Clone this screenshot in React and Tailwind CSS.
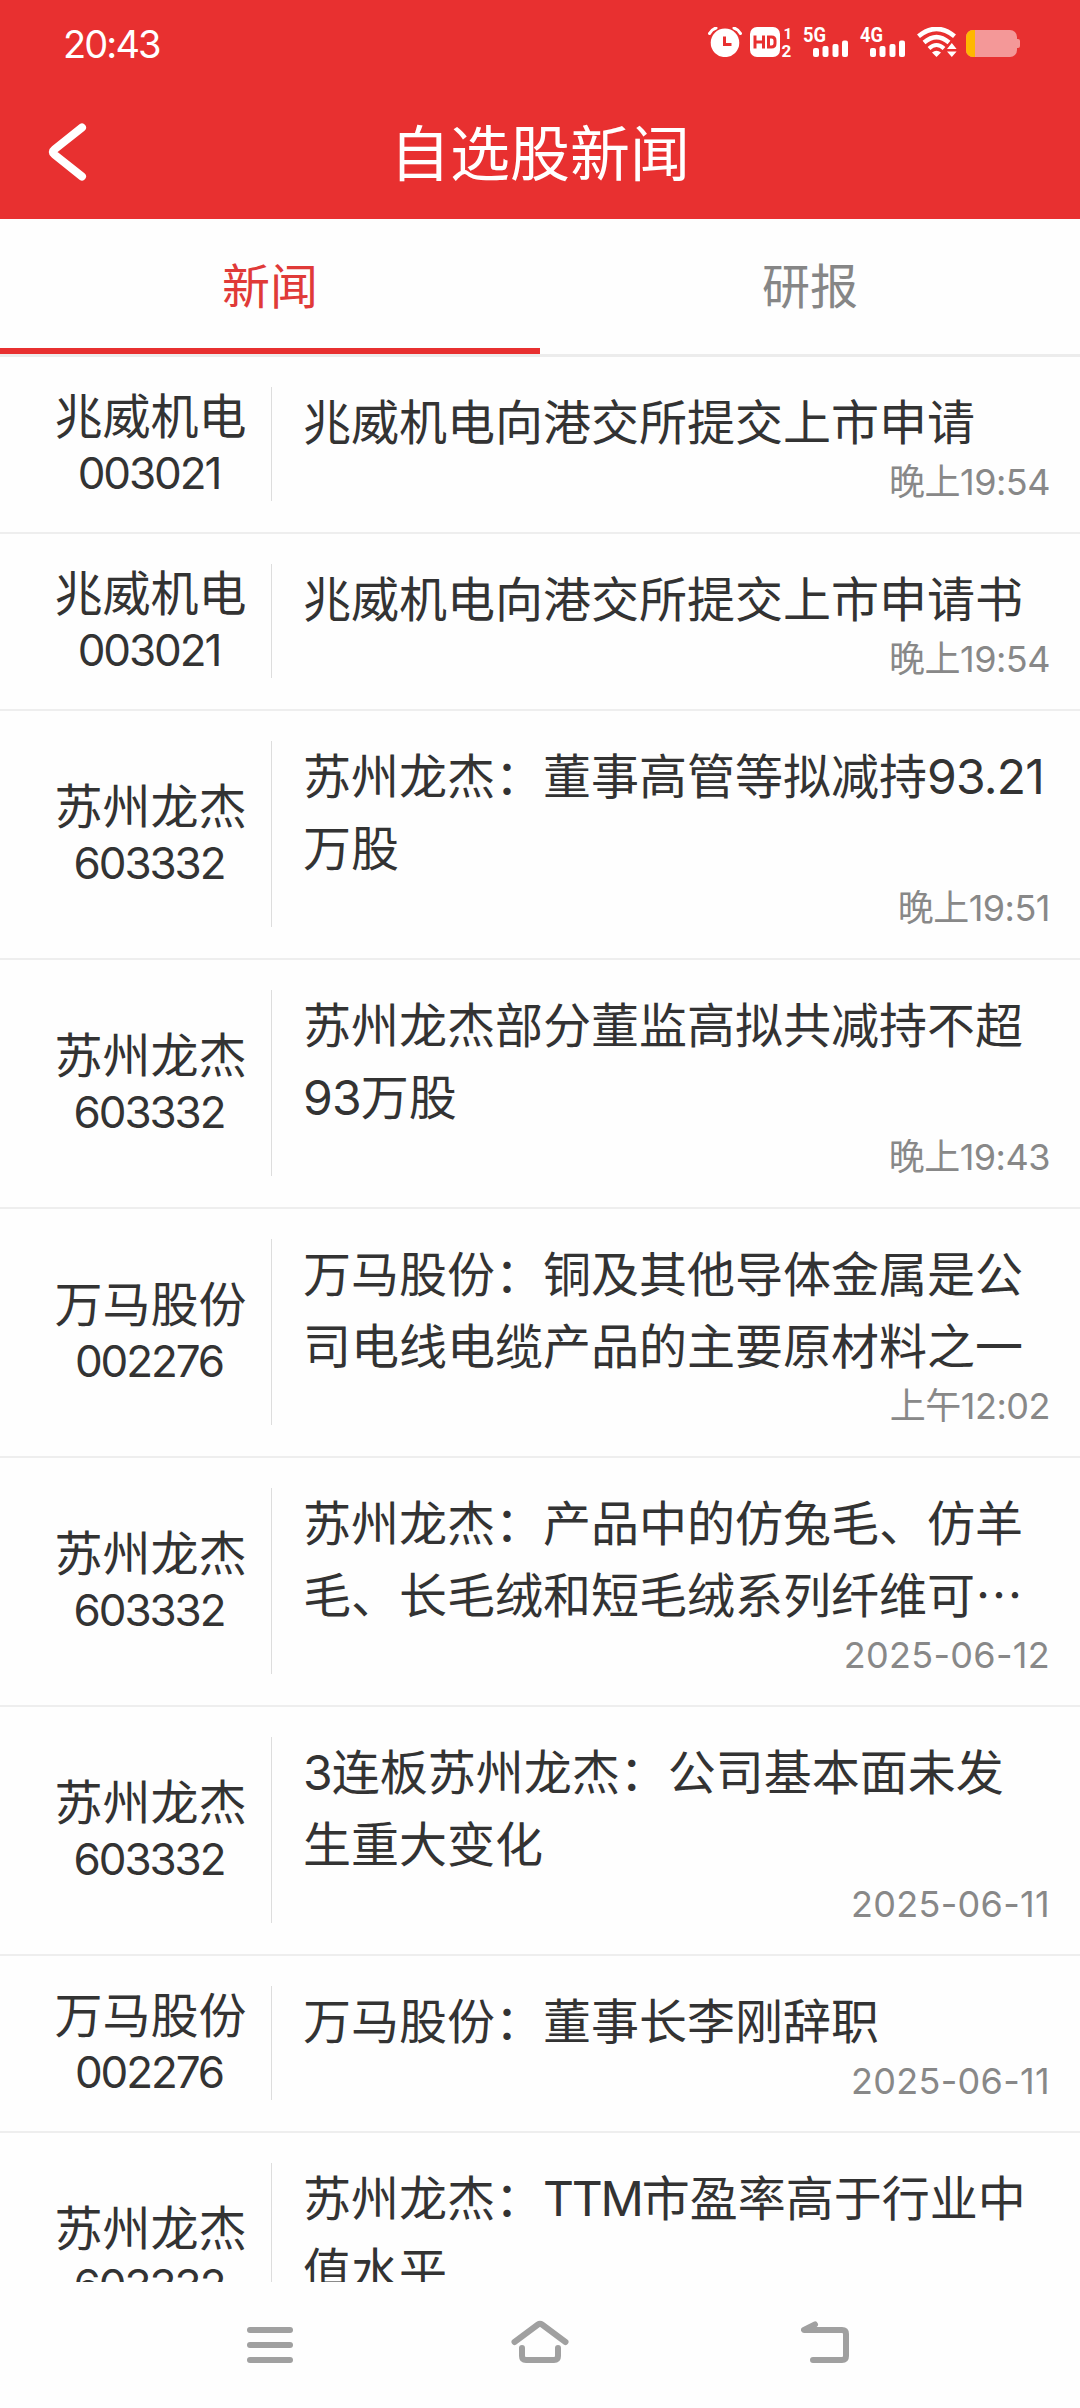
const news = [
  { name: '兆威机电', code: '003021', title: ['兆威机电向港交所提交上市申请'], time: '晚上19:54' },
  { name: '兆威机电', code: '003021', title: ['兆威机电向港交所提交上市申请书'], time: '晚上19:54' },
  { name: '苏州龙杰', code: '603332', title: ['苏州龙杰：董事高管等拟减持93.21', '万股'], time: '晚上19:51' },
  { name: '苏州龙杰', code: '603332', title: ['苏州龙杰部分董监高拟共减持不超', '93万股'], time: '晚上19:43' },
  { name: '万马股份', code: '002276', title: ['万马股份：铜及其他导体金属是公', '司电线电缆产品的主要原材料之一'], time: '上午12:02' },
  { name: '苏州龙杰', code: '603332', title: ['苏州龙杰：产品中的仿兔毛、仿羊', '毛、长毛绒和短毛绒系列纤维可⋯'], time: '2025-06-12' },
  { name: '苏州龙杰', code: '603332', title: ['3连板苏州龙杰：公司基本面未发', '生重大变化'], time: '2025-06-11' },
  { name: '万马股份', code: '002276', title: ['万马股份：董事长李刚辞职'], time: '2025-06-11' },
  { name: '苏州龙杰', code: '603332', title: ['苏州龙杰：TTM市盈率高于行业中', '值水平'], time: '2025-06-11' },
];

function Signal({ label }) {
  return (
    <svg className="overflow-visible" width="46" height="30" viewBox="0 0 46 30" fill="#fff">
      <text x="0" y="14.5" fontSize="20" fontWeight="700" textLength="23" lengthAdjust="spacingAndGlyphs">
        {label}
      </text>
      <rect x="10" y="21" width="6" height="9" rx="2" />
      <rect x="19.5" y="19" width="6" height="11" rx="2" />
      <rect x="29.5" y="17" width="6" height="13" rx="2" />
      <rect x="39" y="13.5" width="6" height="16.5" rx="2" />
    </svg>
  );
}

function StatusBar() {
  return (
    <div className="flex h-[87px] items-center justify-between pl-[63px] pr-[60px]">
      <span className="font-[Inter,sans-serif] text-[38px] leading-none tracking-[-1.9px]">20:43</span>
      <div className="mt-[-3px] flex items-center font-[Roboto,sans-serif]">
        {/* Alarm */}
        <svg width="34" height="30" viewBox="0 0 34 30" fill="none">
          <circle cx="17" cy="15.8" r="14.3" fill="#fff" />
          <path d="M0 7Q2.5 2 8 0M34 7Q31.5 2 26 0" stroke="#e83030" strokeWidth="7" />
          <path d="M1.5 6.5Q3.5 2.5 8 1M32.5 6.5Q30.5 2.5 26 1" stroke="#fff" strokeWidth="3" strokeLinecap="round" />
          <path d="M16.5 9.5v8h7" stroke="#e83030" strokeWidth="3" />
        </svg>
        {/* HD, both SIM cards */}
        <svg className="ml-2 overflow-visible" width="43" height="30" viewBox="0 0 43 30" fill="none">
          <rect width="30" height="30" rx="7" fill="#fff" />
          <path d="M5 8.5v13M13.5 8.5v13M5 15h8.5M18.5 10h3q3.5 0 3.5 3.5v3q0 3.5-3.5 3.5h-3Z" stroke="#e83030" strokeWidth="3" />
          <text x="33.5" y="11.5" fontSize="15" fontWeight="700" fill="#fff">1</text>
          <text x="31.5" y="30" fontSize="17" fontWeight="700" fill="#fff">2</text>
        </svg>
        <div className="ml-[10px] flex gap-[11px]">
          <Signal label="5G" />
          <Signal label="4G" />
        </div>
        {/* Wi-Fi */}
        <svg className="ml-[11px]" width="40" height="30" viewBox="0 0 40 30" fill="none">
          <path d="M1.5 9.3Q19.5-5.5 37.5 9.3" stroke="#fff" strokeWidth="4.6" />
          <path d="M7 15.5Q19.5 4.7 32 15.5" stroke="#fff" strokeWidth="4.4" />
          <path d="M12 21.5Q19.5 14.5 27 21.5" stroke="#fff" strokeWidth="4" />
          <path d="M15 25.5q4.5-3.5 9 0L19.5 30Z" fill="#fff" />
          <path d="M28 23 34.8 13 41 23V32H28Z" fill="#e83030" />
          <path d="M30 22 34.8 16 39.6 22ZM30 24.5 34.8 30 39.6 24.5Z" fill="#fff" />
        </svg>
        {/* Battery */}
        <div className="ml-[9px] mt-[3px] flex items-center">
          <div className="h-[27px] w-[51px] overflow-hidden rounded-[7px] bg-[#f49898]">
            <div className="h-full w-[9px] bg-[#ffb800]" />
          </div>
          <div className="h-[9px] w-[3px] rounded-r-[2px] bg-[#f49898]" />
        </div>
      </div>
    </div>
  );
}

function Header() {
  return (
    <div className="grid h-[132px] grid-cols-[1fr_auto_1fr] items-center">
      <svg className="ml-[47px] mb-[3px]" width="40" height="60" viewBox="0 0 40 60" fill="none">
        <path d="M35 5.5 7.5 27.3Q4 30 7.5 32.7L35 54.5" stroke="#fff" strokeWidth="8" strokeLinecap="round" />
      </svg>
      <h1 className="pt-[2px] text-[60px] leading-none">自选股新闻</h1>
    </div>
  );
}

function Tabs() {
  return (
    <div className="flex h-[138px] border-b-[3px] border-[#ececec] text-[48px]">
      <div className="flex flex-1 items-center justify-center border-b-[6px] border-[#e83030] pt-[6px] text-[#e03a38]">新闻</div>
      <div className="flex flex-1 items-center justify-center text-[#868686]">研报</div>
    </div>
  );
}

// Latin letters and digits run a little tighter than the Chinese text
function TitleLine({ text }) {
  return (
    <p className="whitespace-nowrap">
      {text.split(/([A-Z]+|[\d.]+)/).map((part, i) => {
        if (/^[A-Z]/.test(part)) return <span key={i} className="tracking-[-2.2px]">{part}</span>;
        if (/^\d/.test(part)) return <span key={i} className="tracking-[-0.8px]">{part}</span>;
        return part;
      })}
    </p>
  );
}

function NewsRow({ item }) {
  const isDate = item.time.startsWith('20');

  return (
    <div className="flex shrink-0 border-b-2 border-[#eeeeee] px-[30px] pb-[31px] pt-[30px]">
      <div className="flex w-[241px] shrink-0 flex-col items-center justify-center pt-[2px] leading-[56px]">
        <span className="text-[48px]">{item.name}</span>
        <span className="pr-[3px] font-[Inter,sans-serif] text-[44px] tracking-[-2.1px]">{item.code}</span>
      </div>
      <div className="min-w-0 flex-1 border-l border-[#dddddd] pl-[31px]">
        <div className="text-[48px] leading-[72px]">
          {item.title.map((line) => (
            <TitleLine key={line} text={line} />
          ))}
        </div>
        <p
          className={`pt-[5px] text-right text-[36px] leading-[37px] text-[#888888] ${
            isDate ? 'tracking-[0.3px]' : 'tracking-[-0.5px]'
          }`}
        >
          {item.time}
        </p>
      </div>
    </div>
  );
}

function NavBar() {
  return (
    <div className="grid h-[126px] grid-cols-3 items-center justify-items-center px-[135px]">
      <svg width="46" height="36" viewBox="0 0 46 36" fill="#a0a0a0">
        <rect width="46" height="6" rx="3" />
        <rect y="15" width="46" height="6" rx="3" />
        <rect y="30" width="46" height="6" rx="3" />
      </svg>
      <svg className="mb-[7px]" width="58" height="43" viewBox="0 0 58 43" fill="none" stroke="#a0a0a0" strokeWidth="6" strokeLinecap="round">
        <path d="M3.5 22 27 4.5Q29 3 31 4.5L54.5 22" />
        <path d="M11 28v8q0 4 4 4h28q4 0 4-4v-8" />
      </svg>
      <svg className="mb-[6px] ml-[30px]" width="48" height="42" viewBox="0 0 48 42" fill="none" stroke="#a0a0a0" strokeWidth="6" strokeLinecap="round" strokeLinejoin="round">
        <path d="M14 3.5 3 9H41q4 0 4 4v22q0 4-4 4H12" />
      </svg>
    </div>
  );
}

export default function App() {
  return (
    <div className="flex h-[2408px] w-[1080px] flex-col overflow-hidden bg-[#fefefe] font-[Inter,'Noto_Sans_CJK_SC',sans-serif] text-[#333333]">
      <div className="bg-[#e83030] text-white">
        <StatusBar />
        <Header />
      </div>
      <Tabs />
      <div className="flex min-h-0 flex-1 flex-col overflow-hidden">
        {news.map((item, i) => (
          <NewsRow key={i} item={item} />
        ))}
      </div>
      <NavBar />
    </div>
  );
}
